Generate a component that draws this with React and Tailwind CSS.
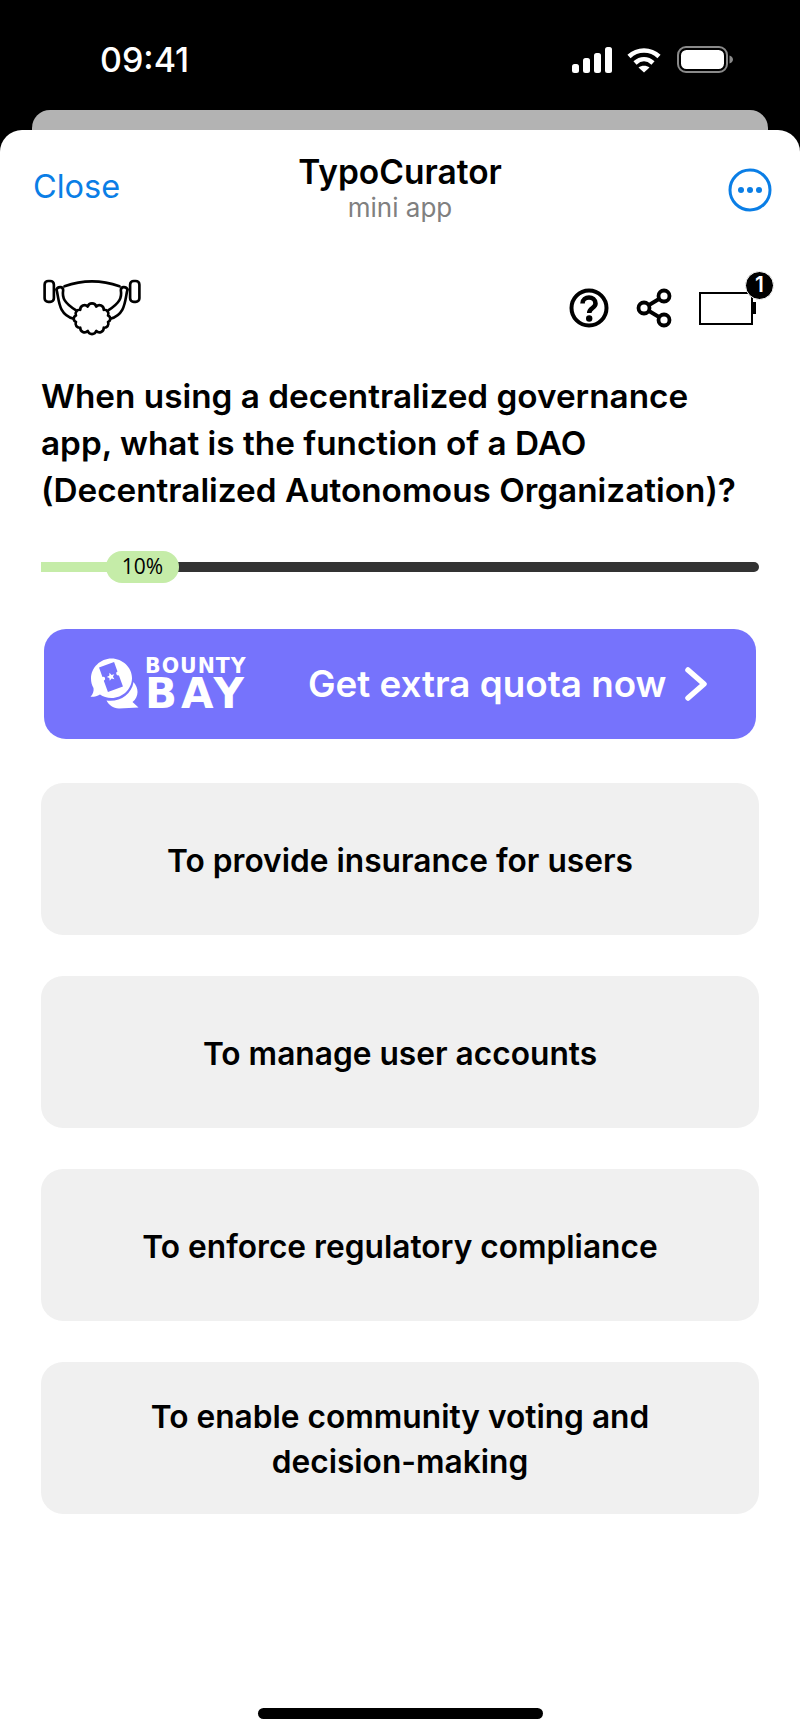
import React from 'react';

const font = { inter: "font-['Inter',sans-serif]" };

const options = [
  'To provide insurance for users',
  'To manage user accounts',
  'To enforce regulatory compliance',
  'To enable community voting and decision-making',
];

const StatusIcons = () => (
  <div className="flex items-center">
    <svg width="40" height="26" viewBox="0 0 40 26" fill="white">
      <rect x="0" y="17" width="7" height="9" rx="2.5" />
      <rect x="11" y="11" width="7" height="15" rx="2.5" />
      <rect x="22" y="6" width="7" height="20" rx="2.5" />
      <rect x="33" y="0" width="7" height="26" rx="2.5" />
    </svg>
    <svg className="ml-[15px]" width="34" height="26" viewBox="0 0 34 26" fill="none" stroke="white" strokeWidth="4.6">
      <path d="M2 9.5C10.5 1.5 23.5 1.5 32 9.5" />
      <path d="M8 16C13.5 11 20.5 11 26 16" />
      <path d="M17 25.5L11.5 20.5C14.5 18 19.5 18 22.500 20.5Z" fill="white" stroke="none" />
    </svg>
    <svg className="ml-[16px]" width="57" height="27" viewBox="0 0 57 27" fill="none">
      <rect x="1" y="1" width="49" height="25" rx="8" stroke="#8a8a8a" strokeWidth="2" />
      <rect x="4" y="4" width="43" height="19" rx="5.500" fill="white" />
      <path d="M52.500 9.500C55 10.500 56 12 56 13.500C56 15 55 16.500 52.500 17.500Z" fill="#8a8a8a" />
    </svg>
  </div>
);

const MascotLogo = () => (
  <svg className="ml-[1px]" width="100" height="58" viewBox="125 85 300 175" fill="none" stroke="black" strokeWidth="8" strokeLinecap="round" strokeLinejoin="round">
    <rect x="132" y="94" width="28" height="63" rx="11" />
    <rect x="390" y="94" width="28" height="63" rx="11" />
    <path d="M192 110Q275 80 358 110" />
    <path d="M168 120C172 110 188 110 188 122C184 145 192 160 226 182" />
    <path d="M382 120C378 110 362 110 362 122C366 145 358 160 325 182" />
    <path d="M168 120C176 150 172 195 220 208" />
    <path d="M382 120C374 150 378 195 330 208" />
    {/* scalloped hair */}
    <path d="M323.300 217.800A12 12 0 0 1 310.400 234.900A13 13 0 0 1 287.900 244.700A13.500 13.500 0 0 1 262.100 244.700A13 13 0 0 1 239.600 234.900A12 12 0 0 1 226.700 217.800A10.500 10.500 0 0 1 226.700 198.200A12 12 0 0 1 239.600 181.100A13 13 0 0 1 262.100 171.300A13.500 13.500 0 0 1 287.900 171.300A13 13 0 0 1 310.400 181.100A12 12 0 0 1 323.300 198.200A10.500 10.500 0 0 1 323.300 217.800Z" fill="white" />
  </svg>
);

const HelpIcon = () => (
  <svg width="40" height="40" viewBox="0 0 40 40" fill="none" stroke="black">
    <circle cx="20" cy="20" r="17.500" strokeWidth="4" />
    <path d="M13.500 15.500C13.500 7.500 26.500 7.500 26.500 15.500C26.500 20 20.200 20 20.200 25" strokeWidth="4.600" />
    <circle cx="20.200" cy="30.500" r="3.200" fill="black" stroke="none" />
  </svg>
);

const ShareIcon = () => (
  <svg width="38" height="42" viewBox="0 0 38 42" fill="none" stroke="black" strokeWidth="3.800">
    <path d="M14 18L24 12M14 24L24 30" />
    <circle cx="29" cy="9" r="5.500" />
    <circle cx="9" cy="21" r="5.500" />
    <circle cx="29" cy="33" r="5.500" />
  </svg>
);

const CardsIcon = () => (
  <div className="relative w-[58px] h-[33px]">
    <div className="w-[54px] h-[33px] border-[2.5px] border-black" />
    <div className="absolute left-[53px] top-[10px] w-[4px] h-[12px] bg-black" />
    <div className="absolute left-[46px] top-[-21px] w-[29px] h-[29px] rounded-full bg-black border border-white flex items-center justify-center text-white text-[21px] font-semibold font-['Inter',sans-serif]">
      1
    </div>
  </div>
);

const BountyBayLogo = () => (
  <div className="flex items-center">
    <svg width="50" height="54" viewBox="0 0 50 54" fill="white">
      <path d="M22.500 1.500C33.500 1.500 43 10.500 43 21C43 32 33.500 41 22.500 41C18 41 14 39.500 11 37.500C8 39.500 5 40 1.500 39.800C4 37 5 34 4.500 31C2.800 28 2 25 2 21.500C2 10.500 11.500 1.500 22.500 1.500Z" />
      <path d="M44.500 25C50.500 32 49.500 40 43.500 45L49.500 50.500L30 51.500C24 51.500 19.500 47.500 17.500 43.500C30 45.500 42.500 38 44.500 25Z" />
      {/* ticket on the front bubble */}
      <g transform="rotate(-20 22 20)">
        <path d="M14 7H30V17A2 2 0 0 0 30 21V33H14V21A2 2 0 0 0 14 17Z" fill="#7673fc" />
        <path d="M22 15.500L23.200 18.200L26 18.500L23.900 20.400L24.500 23.200L22 21.700L19.500 23.200L20.100 20.400L18 18.500L20.800 18.200Z" fill="white" />
      </g>
    </svg>
    <div className="ml-[6px] w-[101px] flex flex-col text-white font-['DejaVu_Sans',sans-serif] font-bold">
      <span className="text-[20.5px] leading-[20px] tracking-[1px]">BOUNTY</span>
      <span className="text-[42px] leading-[36px] tracking-[4px] whitespace-nowrap">BAY</span>
    </div>
  </div>
);

export default function App() {
  return (
    <div className={`w-[800px] h-[1734px] bg-black flex flex-col overflow-hidden ${font.inter}`}>
      {/* status bar */}
      <div className="h-[110px] flex items-start justify-between pl-[100px] pr-[66px] pt-[40px]">
        <span className="text-white text-[34px] leading-[40px] font-medium">09:41</span>
        <div className="pt-[6px]">
          <StatusIcons />
        </div>
      </div>

      {/* sheet stacked behind */}
      <div className="h-[20px] mx-[32px] bg-[#b3b3b3] rounded-t-[18px]" />

      <div className="flex-1 bg-white rounded-t-[22px] flex flex-col">
        <header className="grid grid-cols-[1fr_auto_1fr] items-center px-[33px] pt-[20px]">
          <span className="text-[#0a7ee6] text-[32.5px] leading-[40px] mt-[2px]">Close</span>
          <div className="flex flex-col items-center">
            <span className="text-black text-[33.5px] leading-[44px] font-semibold">TypoCurator</span>
            <span className="text-[#808080] text-[26px] leading-[28px]">mini app</span>
          </div>
          <div className="flex justify-end mr-[-5px] mt-[7px]">
            <svg width="44" height="44" viewBox="0 0 44 44" fill="#0a7ee6">
              <circle cx="22" cy="22" r="20" fill="none" stroke="#0a7ee6" strokeWidth="3" />
              <circle cx="13" cy="22" r="3" />
              <circle cx="22" cy="22" r="3" />
              <circle cx="31" cy="22" r="3" />
            </svg>
          </div>
        </header>

        <main className="px-[41px] flex flex-col">
          <div className="mt-[56px] flex items-center justify-between">
            <MascotLogo />
            <div className="flex items-center mt-[2px]">
              <HelpIcon />
              <div className="ml-[26px]"><ShareIcon /></div>
              <div className="ml-[26px] mr-[2px]"><CardsIcon /></div>
            </div>
          </div>

          <h1 className="mt-[37px] text-[33.3px] leading-[47px] font-semibold text-black">
            When using a decentralized governance app, what is the function of a DAO (Decentralized Autonomous Organization)?
          </h1>

          {/* progress */}
          <div className="mt-[37px] relative h-[32px] flex items-center">
            <div className="w-full h-[10px] rounded-r-full bg-[#333333] overflow-hidden">
              <div className="w-[10%] h-full bg-[#c5eca8]" />
            </div>
            <div className="absolute left-[65px] top-0 w-[73px] h-[32px] rounded-full bg-[#c5eca8] flex items-center justify-center text-[21px] text-black font-['Open_Sans',sans-serif]">
              10%
            </div>
          </div>

          <div className="mt-[46px] mx-[3px] h-[110px] rounded-[22px] bg-[#7673fc] flex items-center pl-[45px]">
            <BountyBayLogo />
            <span className="ml-[62px] pt-[1px] text-white text-[36.8px] font-semibold leading-none whitespace-nowrap">Get extra quota now</span>
            <svg className="ml-[18px]" width="24" height="36" viewBox="0 0 24 36" fill="none" stroke="white" strokeWidth="5.500" strokeLinecap="round" strokeLinejoin="round">
              <path d="M4 4L20 18L4 32" />
            </svg>
          </div>

          <div className="mt-[44px] flex flex-col gap-[41px]">
            {options.map((text) => (
              <div key={text} className="h-[152px] rounded-[22px] bg-[#f0f0f0] flex items-center justify-center px-[90px] pt-[2px] text-center text-[31.7px] leading-[45px] font-semibold text-black">
                {text}
              </div>
            ))}
          </div>
        </main>

        <div className="mt-auto mb-[15px] mx-auto w-[285px] h-[11px] rounded-full bg-black" />
      </div>
    </div>
  );
}
